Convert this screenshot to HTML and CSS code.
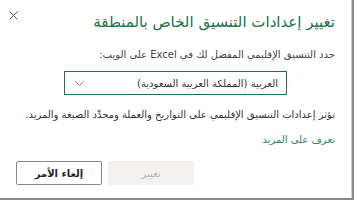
FILE: index.html
```html
<!DOCTYPE html>
<html lang="ar">
<head>
  <meta charset="UTF-8" />
  <title>تغيير إعدادات التنسيق الخاص بالمنطقة</title>
  <link rel="stylesheet" href="styles.css">
</head>
<body>
  <div class="dialog" dir="rtl">
    <button class="close" aria-label="إغلاق">
      <svg width="9" height="9" viewBox="0 0 9 9"><path d="M0.5 0.5 L8.5 8.5 M8.5 0.5 L0.5 8.5" stroke="#555" stroke-width="1"/></svg>
    </button>
    <h1 class="title">تغيير إعدادات التنسيق الخاص بالمنطقة</h1>
    <p class="label">حدد التنسيق الإقليمي المفضل لك في Excel على الويب:</p>
    <div class="select">
      <span>العربية (المملكة العربية السعودية)</span>
      <svg width="9" height="5" viewBox="0 0 9 5"><path d="M0.5 0.5 L4.5 4.5 L8.5 0.5" fill="none" stroke="#888" stroke-width="1"/></svg>
    </div>
    <p class="note">تؤثر إعدادات التنسيق الإقليمي على التواريخ والعملة ومحدِّد الصيغة والمزيد.</p>
    <a class="more" href="#">تعرف على المزيد</a>
    <div class="actions">
      <button class="btn disabled" disabled>تغيير</button>
      <button class="btn">إلغاء الأمر</button>
    </div>
  </div>
</body>
</html>
```
FILE: styles.css
```css
body {
  margin: 0;
  background: #8a8a8a;
  font-family: "DejaVu Sans", sans-serif;
}
.dialog {
  position: relative;
  width: 352px;
  height: 198px;
  box-sizing: border-box;
  background: #fff;
  border-right: 1px solid #d0d0d0;
  padding: 10px 16px 0 16px;
  color: #333;
}
.close {
  position: absolute;
  left: 8px;
  top: 8px;
  border: none;
  background: none;
  padding: 0;
  width: 10px;
  height: 10px;
}
.title {
  margin: 0;
  font-size: 15px;
  font-weight: normal;
  color: #217346;
  line-height: 24px;
}
.label {
  margin: 14px 0 0;
  font-size: 10px;
  line-height: 14px;
  color: #444;
}
.select {
  margin: 9px 48px 0 48px;
  height: 24px;
  box-sizing: border-box;
  border: 1.5px solid #217346;
  display: flex;
  align-items: center;
  justify-content: space-between;
  padding: 0 8px 0 10px;
  font-size: 10px;
}
.note {
  margin: 13px 0 0;
  font-size: 10px;
  line-height: 14px;
}
.more {
  display: block;
  margin-top: 12px;
  font-size: 10px;
  color: #2e8b57;
  text-decoration: none;
}
.actions {
  display: flex;
  justify-content: flex-end;
  gap: 6px;
  margin-top: 16px;
}
.btn {
  width: 86px;
  height: 24px;
  border: 1px solid #8a8886;
  border-radius: 2px;
  background: #fff;
  font-family: inherit;
  font-size: 10px;
  font-weight: bold;
  color: #222;
}
.btn.disabled {
  border-color: #f3f2f1;
  background: #f3f2f1;
  color: #b3b0ad;
  font-weight: normal;
}
```
